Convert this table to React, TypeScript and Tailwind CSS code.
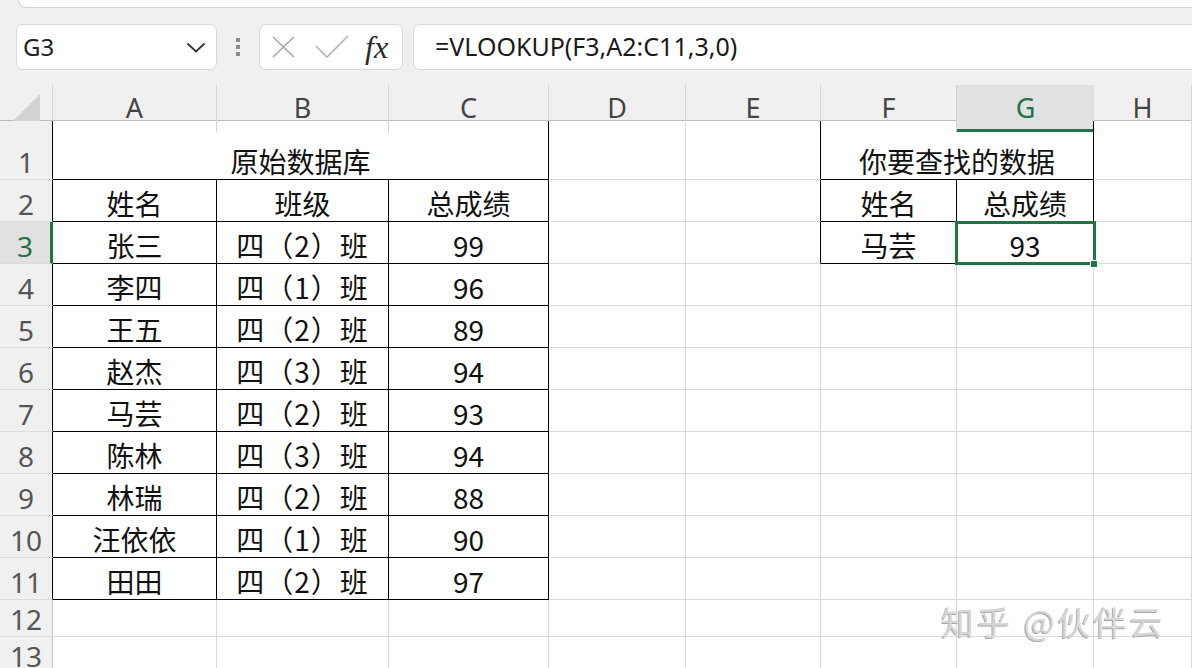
import React from "react";

const GRID = "border-[#dadada]";
const CJK = "font-['Noto_Sans_CJK_SC','Noto_Sans',sans-serif]";
const UI = "font-['Noto_Sans','Noto_Sans_CJK_SC',sans-serif]";

const COLS = ["A", "B", "C", "D", "E", "F", "G", "H"];

const DATA = [
  ["张三", "四（2）班", "99"],
  ["李四", "四（1）班", "96"],
  ["王五", "四（2）班", "89"],
  ["赵杰", "四（3）班", "94"],
  ["马芸", "四（2）班", "93"],
  ["陈林", "四（3）班", "94"],
  ["林瑞", "四（2）班", "88"],
  ["汪依依", "四（1）班", "90"],
  ["田田", "四（2）班", "97"],
];

type CellProps = {
  children?: React.ReactNode;
  right?: boolean; // black right border
  bottom?: boolean; // black bottom border
  span?: string;
  selected?: boolean;
};

function Cell({ children, right, bottom, span = "", selected }: CellProps) {
  return (
    <div
      className={`relative flex items-end justify-center border-r border-b pb-[1px] text-[28px] leading-[34px] text-[#111] ${CJK} ${span} ${
        right ? "border-r-black" : "border-r-[#dadada]"
      } ${bottom ? "border-b-black" : "border-b-[#dadada]"}`}
    >
      {children}
      {selected && (
        <>
          <div className="absolute -top-[1px] -right-[3px] -bottom-[2px] -left-[2px] z-10 border-[3px] border-[#217346]" />
          <div className="absolute -right-[5px] -bottom-[5px] z-10 h-[8px] w-[8px] border border-white bg-[#217346]" />
        </>
      )}
    </div>
  );
}

function RowHead({ n, edge, active }: { n: number; edge: "black" | "gray"; active?: boolean }) {
  return (
    <div
      className={`flex items-end justify-center border-b border-b-[#dcdcdc] text-[28px] leading-[34px] ${UI} ${
        active
          ? "border-r-[3px] border-r-[#217346] bg-[#e1e1e1] text-[#217346]"
          : `border-r ${edge === "black" ? "border-r-black" : "border-r-[#c8c8c8]"} bg-[#f0f0f0] text-[#555]`
      }`}
    >
      {n}
    </div>
  );
}

function FormulaBar() {
  return (
    <div className="mt-[16px] flex h-[46px] pl-[16px]">
      <div className="flex w-[201px] items-center justify-between rounded-[7px] border border-[#d9d9d9] bg-white pr-[10px] pl-[6px]">
        <span className={`text-[24px] text-[#222] ${UI}`}>G3</span>
        <svg width="20" height="11" viewBox="0 0 20 11" fill="none" stroke="#333" strokeWidth="1.8">
          <path d="M1.5 1.5L10 9.5L18.5 1.5" />
        </svg>
      </div>
      <div className="flex w-[42px] flex-col items-center justify-center gap-[3px]">
        <span className="h-[4px] w-[4px] bg-[#8c8c8c]" />
        <span className="h-[4px] w-[4px] bg-[#8c8c8c]" />
        <span className="h-[4px] w-[4px] bg-[#8c8c8c]" />
      </div>
      <div className="flex w-[144px] items-center rounded-[7px] border border-[#d9d9d9] bg-white pl-[12px]">
        <svg width="23" height="22" viewBox="0 0 23 22" fill="none" stroke="#a9a9a9" strokeWidth="1.6">
          <path d="M1 1L22 21M22 1L1 21" />
        </svg>
        <svg className="ml-[20px]" width="34" height="24" viewBox="0 0 34 24" fill="none" stroke="#b3b3b3" strokeWidth="1.6">
          <path d="M1 11L12 22L33 1" />
        </svg>
        <span className="ml-[16px] font-['Liberation_Serif',serif] text-[32px] leading-none text-[#2b2b2b] italic">
          fx
        </span>
      </div>
      <div className="-mr-[12px] ml-[10px] flex flex-1 items-center rounded-[7px] border border-[#d9d9d9] bg-white pl-[21px]">
        <span className={`text-[25px] text-[#1a1a1a] ${UI}`}>=VLOOKUP(F3,A2:C11,3,0)</span>
      </div>
    </div>
  );
}

export default function App() {
  const rows: React.ReactNode[] = [];

  // row 1
  rows.push(
    <React.Fragment key="r1">
      <RowHead n={1} edge="black" />
      <Cell span="col-span-3" right bottom>原始数据库</Cell>
      <Cell />
      <Cell right />
      <Cell span="col-span-2" right bottom>你要查找的数据</Cell>
      <Cell />
    </React.Fragment>
  );
  // row 2
  rows.push(
    <React.Fragment key="r2">
      <RowHead n={2} edge="black" />
      <Cell right bottom>姓名</Cell>
      <Cell right bottom>班级</Cell>
      <Cell right bottom>总成绩</Cell>
      <Cell />
      <Cell right />
      <Cell right bottom>姓名</Cell>
      <Cell right bottom>总成绩</Cell>
      <Cell />
    </React.Fragment>
  );
  DATA.forEach((d, i) => {
    const n = i + 3;
    rows.push(
      <React.Fragment key={`r${n}`}>
        <RowHead n={n} edge="black" active={n === 3} />
        <Cell right bottom>{d[0]}</Cell>
        <Cell right bottom>
          <span className="tracking-[1px]">{d[1]}</span>
        </Cell>
        <Cell right bottom>{d[2]}</Cell>
        <Cell />
        <Cell right={n === 3} />
        {n === 3 ? (
          <>
            <Cell right bottom>马芸</Cell>
            <Cell right bottom selected>93</Cell>
          </>
        ) : (
          <>
            <Cell />
            <Cell />
          </>
        )}
        <Cell />
      </React.Fragment>
    );
  });
  [12, 13].forEach((n) => {
    rows.push(
      <React.Fragment key={`r${n}`}>
        <RowHead n={n} edge="gray" />
        {COLS.map((c) => (
          <Cell key={c} />
        ))}
      </React.Fragment>
    );
  });

  return (
    <div className="relative h-[668px] w-[1192px] overflow-hidden bg-[#f0f0f0]">
      <div className="ml-[18px] h-[8px] rounded-bl-[10px] border-b border-l border-[#d2d2d2] bg-white" />
      <FormulaBar />

      {/* column headers */}
      <div className={`mt-[15px] grid h-[36px] grid-cols-[53px_164px_172px_160px_137px_135px_136px_137px_1fr] border-b border-[#bdbdbd] ${UI}`}>
        <div className="flex items-center justify-center border-r border-[#d4d4d4]">
          <svg width="30" height="30" viewBox="0 0 30 30">
            <polygon points="29,1 29,29 1,29" fill="#d2d2d2" />
          </svg>
        </div>
        {COLS.map((c) => (
          <div
            key={c}
            className={`flex items-center justify-center text-[27px] ${
              c === "G"
                ? "border-b-[3px] border-b-[#217346] bg-[#e1e1e1] pt-[3px] text-[#217346]"
                : "border-r border-[#d4d4d4] text-[#444]"
            }`}
          >
            {c}
          </div>
        ))}
      </div>

      {/* sheet */}
      <div
        className={`grid grid-cols-[53px_164px_172px_160px_137px_135px_136px_137px_1fr] grid-rows-[59px_repeat(10,42px)_37px_37px] bg-white ${GRID}`}
      >
        {rows}
      </div>

      {/* watermark */}
      <div
        className={`absolute top-[597px] left-[941px] z-20 text-[33px] tracking-[3px] text-[#d6d6d6] [text-shadow:-1px_1px_0_#a8a8a8] ${CJK}`}
      >
        知乎 @伙伴云
      </div>
    </div>
  );
}
